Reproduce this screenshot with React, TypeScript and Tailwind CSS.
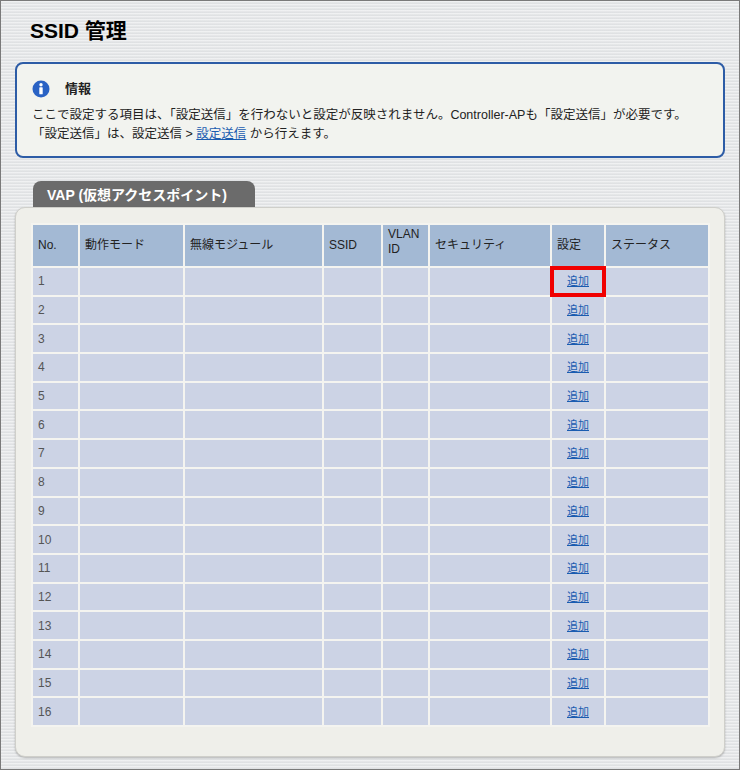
export default function App() {
  const cols = [
    { label: "No.", w: 47 },
    { label: "動作モード", w: 105 },
    { label: "無線モジュール", w: 139 },
    { label: "SSID", w: 59 },
    { label: "VLAN ID", w: 47 },
    { label: "セキュリティ", w: 122 },
    { label: "設定", w: 54 },
    { label: "ステータス", w: 104 },
  ]
  const rows = Array.from({ length: 16 }, (_, i) => i + 1)
  const font = { fontFamily: '"Liberation Sans", "Noto Sans CJK JP", sans-serif' }

  return (
    <div
      className="w-[740px] h-[770px] border border-[#7a7a7a] bg-[#e3e5e7] text-[#222] text-[12px] overflow-hidden"
      style={{
        ...font,
        backgroundImage:
          "repeating-linear-gradient(180deg, rgba(255,255,255,0.45) 0px, rgba(255,255,255,0.45) 1px, rgba(0,0,0,0.03) 2px, rgba(0,0,0,0) 3px)",
      }}
    >
      <h1 className="px-[29px] pt-[15px] h-[61px] text-[21px] font-bold text-black leading-[30px]">SSID 管理</h1>

      {/* 情報 */}
      <div className="mx-[14px] h-[96px] rounded-[8px] border-2 border-[#2d5ca6] bg-[#f2f3ef] px-[15px] pt-[14px]">
        <div className="flex items-center gap-[15px] h-[22px]">
          <svg width="18" height="18" viewBox="0 0 18 18">
            <circle cx="9" cy="9" r="8.5" fill="#2a62c4" />
            <circle cx="9" cy="4.8" r="1.7" fill="#fff" />
            <rect x="7.3" y="7.3" width="3.4" height="7" rx="0.6" fill="#fff" />
          </svg>
          <span className="font-bold text-[13px]">情報</span>
        </div>
        <p className="mt-[6px] leading-[19px] text-[12.5px]">
          ここで設定する項目は、「設定送信」を行わないと設定が反映されません。Controller-APも「設定送信」が必要です。
          <br />
          「設定送信」は、設定送信 &gt; <a className="text-[#1a5cb0] underline">設定送信</a> から行えます。
        </p>
      </div>

      {/* タブ */}
      <div className="mt-[23px] ml-[32px] w-[222px] h-[26px] rounded-t-[8px] bg-[#6b6b6b] text-white font-bold text-[14px] leading-[28px] pl-[14px]">
        VAP (仮想アクセスポイント)
      </div>

      <div className="mx-[14px] h-[550px] rounded-[10px] border border-[#cfcfca] bg-[#efefea] pt-[15px] px-[15px] shadow-[0_1px_2px_rgba(0,0,0,0.25)]">
        <table className="border-collapse table-fixed w-[678px]">
          <colgroup>
            {cols.map((c) => (
              <col key={c.label} style={{ width: c.w }} />
            ))}
          </colgroup>
          <thead>
            <tr className="h-[43px] bg-[#a3b9d4]">
              {cols.map((c) => (
                <th key={c.label} className="border-2 border-[#f4f4f0] px-[5px] text-left font-normal align-middle leading-[15px]">
                  {c.label === "VLAN ID" ? (
                    <span className="block -mt-[8px]">
                      VLAN
                      <br />
                      ID
                    </span>
                  ) : (
                    c.label
                  )}
                </th>
              ))}
            </tr>
          </thead>
          <tbody>
            {rows.map((n) => (
              <tr key={n} className="h-[28.7px] bg-[#ccd3e5]">
                <td className="border-2 border-[#f4f4f0] px-[5px] text-[#555]">{n}</td>
                <td className="border-2 border-[#f4f4f0]" />
                <td className="border-2 border-[#f4f4f0]" />
                <td className="border-2 border-[#f4f4f0]" />
                <td className="border-2 border-[#f4f4f0]" />
                <td className="border-2 border-[#f4f4f0]" />
                <td className="border-2 border-[#f4f4f0] text-center relative">
                  <a className="text-[#1a5cb0] underline text-[11px]">追加</a>
                  {n === 1 && (
                    <div className="absolute -inset-[2px] border-4 border-[#f00000]" />
                  )}
                </td>
                <td className="border-2 border-[#f4f4f0]" />
              </tr>
            ))}
          </tbody>
        </table>
      </div>
    </div>
  )
}
